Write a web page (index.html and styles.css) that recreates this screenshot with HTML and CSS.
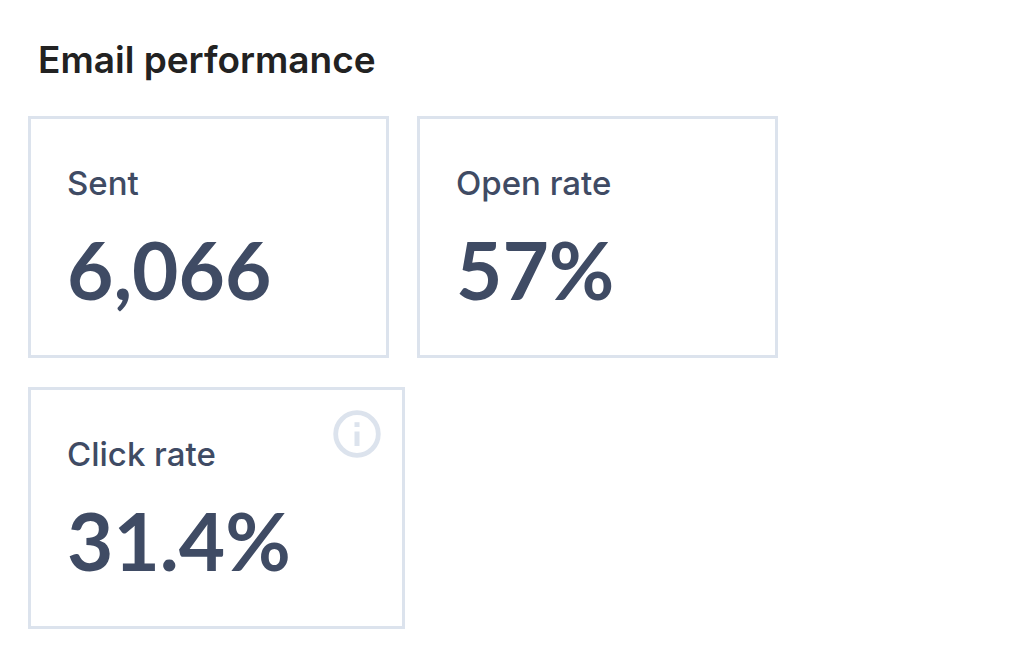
FILE: index.html
```html
<!DOCTYPE html>
<html lang="en">
<head>
<meta charset="utf-8">
<meta name="viewport" content="width=device-width, initial-scale=1">
<title>Email performance</title>
<link rel="stylesheet" href="styles.css">
</head>
<body>
<main class="panel">
  <h1 class="title">Email performance</h1>
  <dl class="cards">
    <div class="card">
      <dt class="label">Sent</dt>
      <dd class="value">6,066</dd>
    </div>
    <div class="card">
      <dt class="label">Open rate</dt>
      <dd class="value">57%</dd>
    </div>
    <div class="card card-wide">
      <dt class="label">Click rate</dt>
      <dd class="value">31.4%</dd>
      <dd class="hint">
        <button class="info" type="button" aria-label="About click rate">
          <svg class="info-icon" viewBox="0 0 48 48" aria-hidden="true">
            <circle cx="24" cy="24" r="21.3" fill="none" stroke="currentColor" stroke-width="4.8"/>
            <rect x="21.5" y="12.2" width="5" height="4.8" fill="currentColor"/>
            <rect x="21.5" y="21.5" width="5" height="14.5" fill="currentColor"/>
          </svg>
        </button>
      </dd>
    </div>
  </dl>
</main>
</body>
</html>
```
FILE: styles.css
```css
* {
  box-sizing: border-box;
}

body {
  margin: 0;
  background: #fff;
  color: #3f4b64;
  font-family: Inter, "Open Sans", sans-serif;
}

.panel {
  max-width: 840px;
  padding: 40px 28px 28px;
}

.title {
  margin: 0 0 36px;
  padding-left: 10px;
  color: #222;
  font-size: 37px;
  font-weight: 600;
  line-height: 40px;
}

.cards {
  display: flex;
  flex-wrap: wrap;
  gap: 29px 28px;
  margin: 0;
}

.card {
  position: relative;
  min-width: 361px;
  padding: 44px 36px 36px;
  border: 3px solid #dce3ed;
}

.card-wide {
  min-width: 377px;
}

.label {
  font-size: 33px;
  font-weight: 500;
  line-height: 40px;
}

.value {
  margin: 16px 0 0;
  font-family: Lato, "Open Sans", sans-serif;
  font-size: 80px;
  font-weight: 700;
  line-height: 100px;
}

.hint {
  position: absolute;
  top: 20px;
  right: 21px;
  margin: 0;
}

.info {
  display: block;
  padding: 0;
  border: 0;
  background: none;
  color: #dce3ed;
}

.info-icon {
  display: block;
  width: 48px;
  height: 48px;
}
```
